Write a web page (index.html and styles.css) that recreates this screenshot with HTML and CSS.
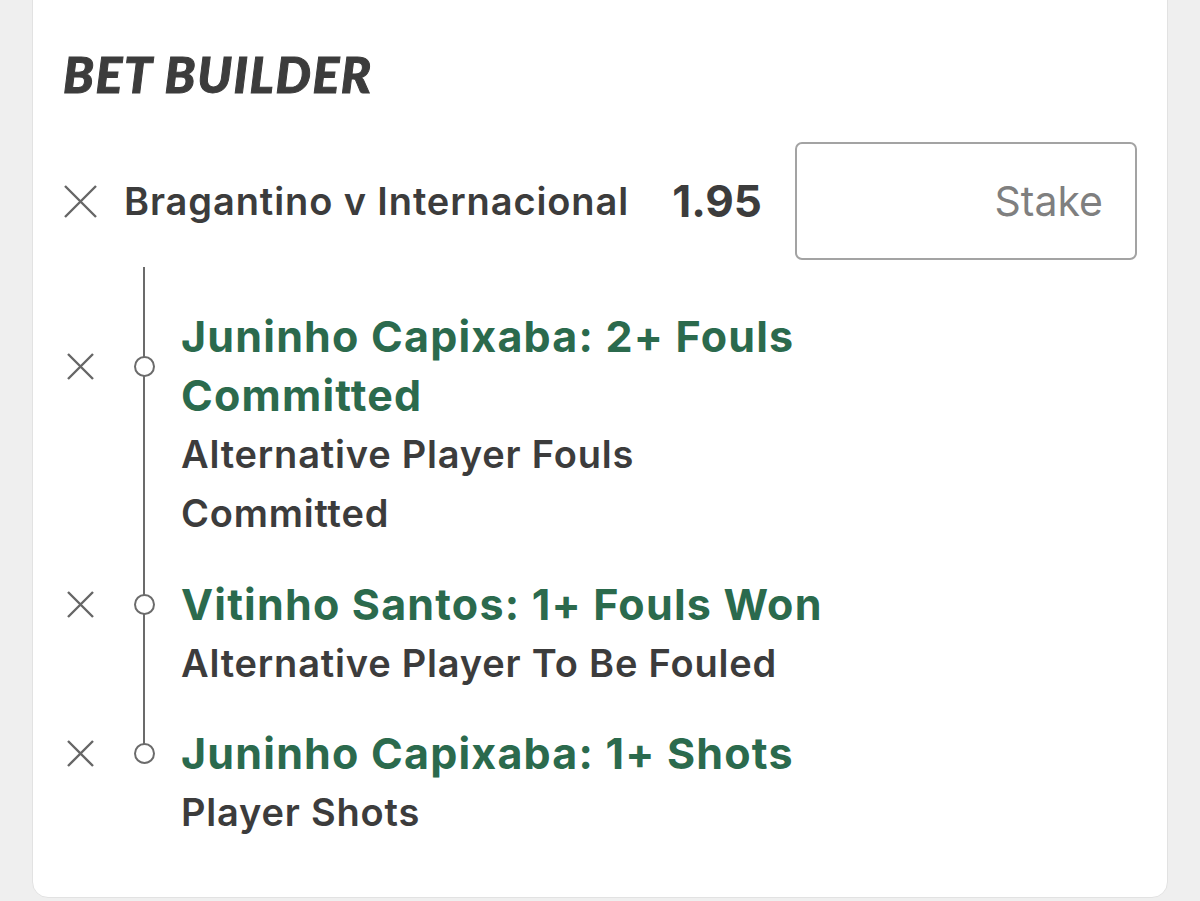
FILE: index.html
```html
<!DOCTYPE html>
<html lang="en">
<head>
  <meta charset="UTF-8">
  <meta name="viewport" content="width=device-width, initial-scale=1.0">
  <title>Bet Builder</title>
  <link rel="stylesheet" href="styles.css">
</head>
<body>
  <div class="card">
    <h1 class="title">BET BUILDER</h1>

    <div class="match-row">
      <button class="remove big" aria-label="Remove">
        <svg viewBox="0 0 33 33" width="33" height="33"><path d="M1 1 L32 32 M32 1 L1 32" /></svg>
      </button>
      <div class="match-name">Bragantino v Internacional</div>
      <div class="odds">1.95</div>
      <input class="stake" type="text" placeholder="Stake">
    </div>

    <div class="legs">
      <div class="leg">
        <button class="remove small" aria-label="Remove">
          <svg viewBox="0 0 27 27" width="27" height="27"><path d="M1 1 L26 26 M26 1 L1 26" /></svg>
        </button>
        <span class="dot"></span>
        <div class="leg-title">Juninho Capixaba: 2+ Fouls Committed</div>
        <div class="leg-market">Alternative Player Fouls Committed</div>
      </div>
      <div class="leg">
        <button class="remove small" aria-label="Remove">
          <svg viewBox="0 0 27 27" width="27" height="27"><path d="M1 1 L26 26 M26 1 L1 26" /></svg>
        </button>
        <span class="dot"></span>
        <div class="leg-title">Vitinho Santos: 1+ Fouls Won</div>
        <div class="leg-market">Alternative Player To Be Fouled</div>
      </div>
      <div class="leg">
        <button class="remove small" aria-label="Remove">
          <svg viewBox="0 0 27 27" width="27" height="27"><path d="M1 1 L26 26 M26 1 L1 26" /></svg>
        </button>
        <span class="dot"></span>
        <div class="leg-title">Juninho Capixaba: 1+ Shots</div>
        <div class="leg-market">Player Shots</div>
      </div>
    </div>
  </div>
</body>
</html>
```

FILE: styles.css
```css
body {
  margin: 0;
  background-color: #efefef;
  font-family: Inter, "Noto Sans", sans-serif;
  color: #3c3c3c;
  height: 901px;
  overflow: hidden;
}
.card {
  box-sizing: border-box;
  width: 1136px;
  height: 918px;
  margin: -20px 0 0 32px;
  padding: 0 30px 0 31px;
  background-color: #fff;
  border: 1px solid #e2e2e2;
  border-radius: 16px;
}
.title {
  margin: 0 0 0 -1px;
  padding-top: 65px;
  font-family: Lato, sans-serif;
  font-style: italic;
  font-weight: 900;
  font-size: 50px;
  line-height: 56px;
  letter-spacing: 1.6px;
  color: #3c3c3c;
  -webkit-text-stroke: 1px #3c3c3c;
}
.match-row {
  display: flex;
  align-items: center;
  margin-top: 40px;
}
.remove {
  padding: 0;
  border: none;
  background: none;
  display: flex;
}
.remove svg path {
  stroke: #666;
  stroke-width: 2.4;
  fill: none;
}
.match-name {
  margin-left: 27px;
  font-size: 38px;
  letter-spacing: 0.9px;
  font-weight: 600;
}
.odds {
  margin-left: auto;
  margin-right: 33px;
  font-size: 44px;
  font-weight: 700;
}
.stake {
  box-sizing: border-box;
  width: 342px;
  height: 118px;
  padding: 0 32px;
  border: 2px solid #a3a3a3;
  border-radius: 7px;
  font-family: Inter, sans-serif;
  font-size: 41px;
  text-align: right;
  color: #3c3c3c;
}
.stake::placeholder {
  color: #7f7f7f;
}
.legs {
  position: relative;
  display: flex;
  flex-direction: column;
  gap: 31.5px;
  padding-top: 47px;
}
.legs::before {
  content: "";
  position: absolute;
  left: 79px;
  top: 7px;
  bottom: 89px;
  width: 2.4px;
  background-color: #6b6b6b;
}
.leg {
  display: grid;
  grid-template-columns: 33px 84px 1fr;
  align-items: center;
}
.leg .remove {
  justify-self: center;
}
.dot {
  position: relative;
  box-sizing: border-box;
  width: 21px;
  height: 21px;
  margin-left: 36.5px;
  border: 2.4px solid #6b6b6b;
  border-radius: 50%;
  background-color: #fff;
}
.leg-title {
  max-width: 655px;
  font-size: 43px;
  line-height: 59px;
  letter-spacing: 1.2px;
  font-weight: 700;
  color: #2b6a4d;
}
.leg-market {
  grid-column: 3;
  max-width: 655px;
  font-size: 38px;
  line-height: 59px;
  letter-spacing: 0.8px;
  font-weight: 600;
}
```
